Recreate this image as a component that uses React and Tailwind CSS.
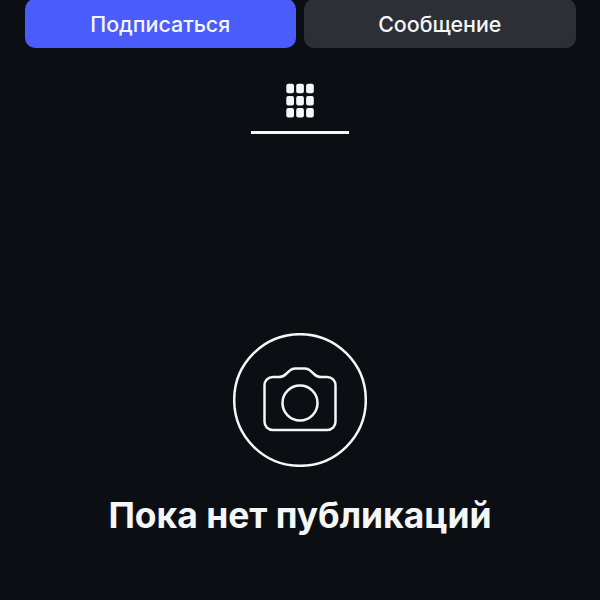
const FONT = { fontFamily: 'Inter, "Noto Sans", sans-serif' }

function GridIcon() {
  const cols = [286.3, 296.2, 306.1]
  const rows = [83.7, 96, 108]
  return (
    <svg width="28" height="35" viewBox="286 83 28 35" fill="#f5f6f7">
      {rows.map((y) =>
        cols.map((x) => <rect key={`${x}-${y}`} x={x} y={y} width="7.7" height="9.5" rx="2" />),
      )}
    </svg>
  )
}

function CameraIcon() {
  return (
    <svg width="134" height="134" viewBox="0 0 134 134" fill="none" stroke="#f5f6f7">
      <circle cx="67" cy="67" r="65.800" strokeWidth="2.500" />
      <path
        strokeWidth="2.500"
        d="M40 44h6c3 0 5-1 7-3l4-3.600c1.500-1.300 3-1.900 5-1.900h10c2 0 3.500.6 5 1.900l4 3.600c2 2 4 3 7 3h6c5 0 8.500 3.500 8.500 8.500v36c0 5-3.500 8.500-8.500 8.500H40c-5 0-8.500-3.500-8.500-8.500v-36c0-5 3.500-8.500 8.500-8.500z"
      />
      <circle cx="67" cy="70" r="17.500" strokeWidth="2.500" />
    </svg>
  )
}

export default function App() {
  return (
    <div className="h-[600px] w-[600px] overflow-hidden bg-[#0b0f14] text-[#f5f6f7]" style={FONT}>
      <div className="-mt-px flex gap-2 px-[24.500px]">
        <button className="flex h-[49px] flex-1 items-center justify-center rounded-[10px] bg-[#4a5dfb] pt-px text-[21.400px] font-medium">
          Подписаться
        </button>
        <button className="flex h-[49px] flex-1 items-center justify-center rounded-[10px] bg-[#2c3036] pt-px text-[21.400px] font-medium">
          Сообщение
        </button>
      </div>

      <div className="mt-[35px] flex justify-center">
        <div className="flex w-[98px] flex-col items-center gap-[12.500px]">
          <GridIcon />
          <div className="h-[3px] w-full bg-[#f5f6f7]" />
        </div>
      </div>

      <div className="mt-[199.500px] flex flex-col items-center">
        <CameraIcon />
        <h2 className="mt-[27px] text-[35.400px] leading-[44px] font-bold">Пока нет публикаций</h2>
      </div>
    </div>
  )
}
